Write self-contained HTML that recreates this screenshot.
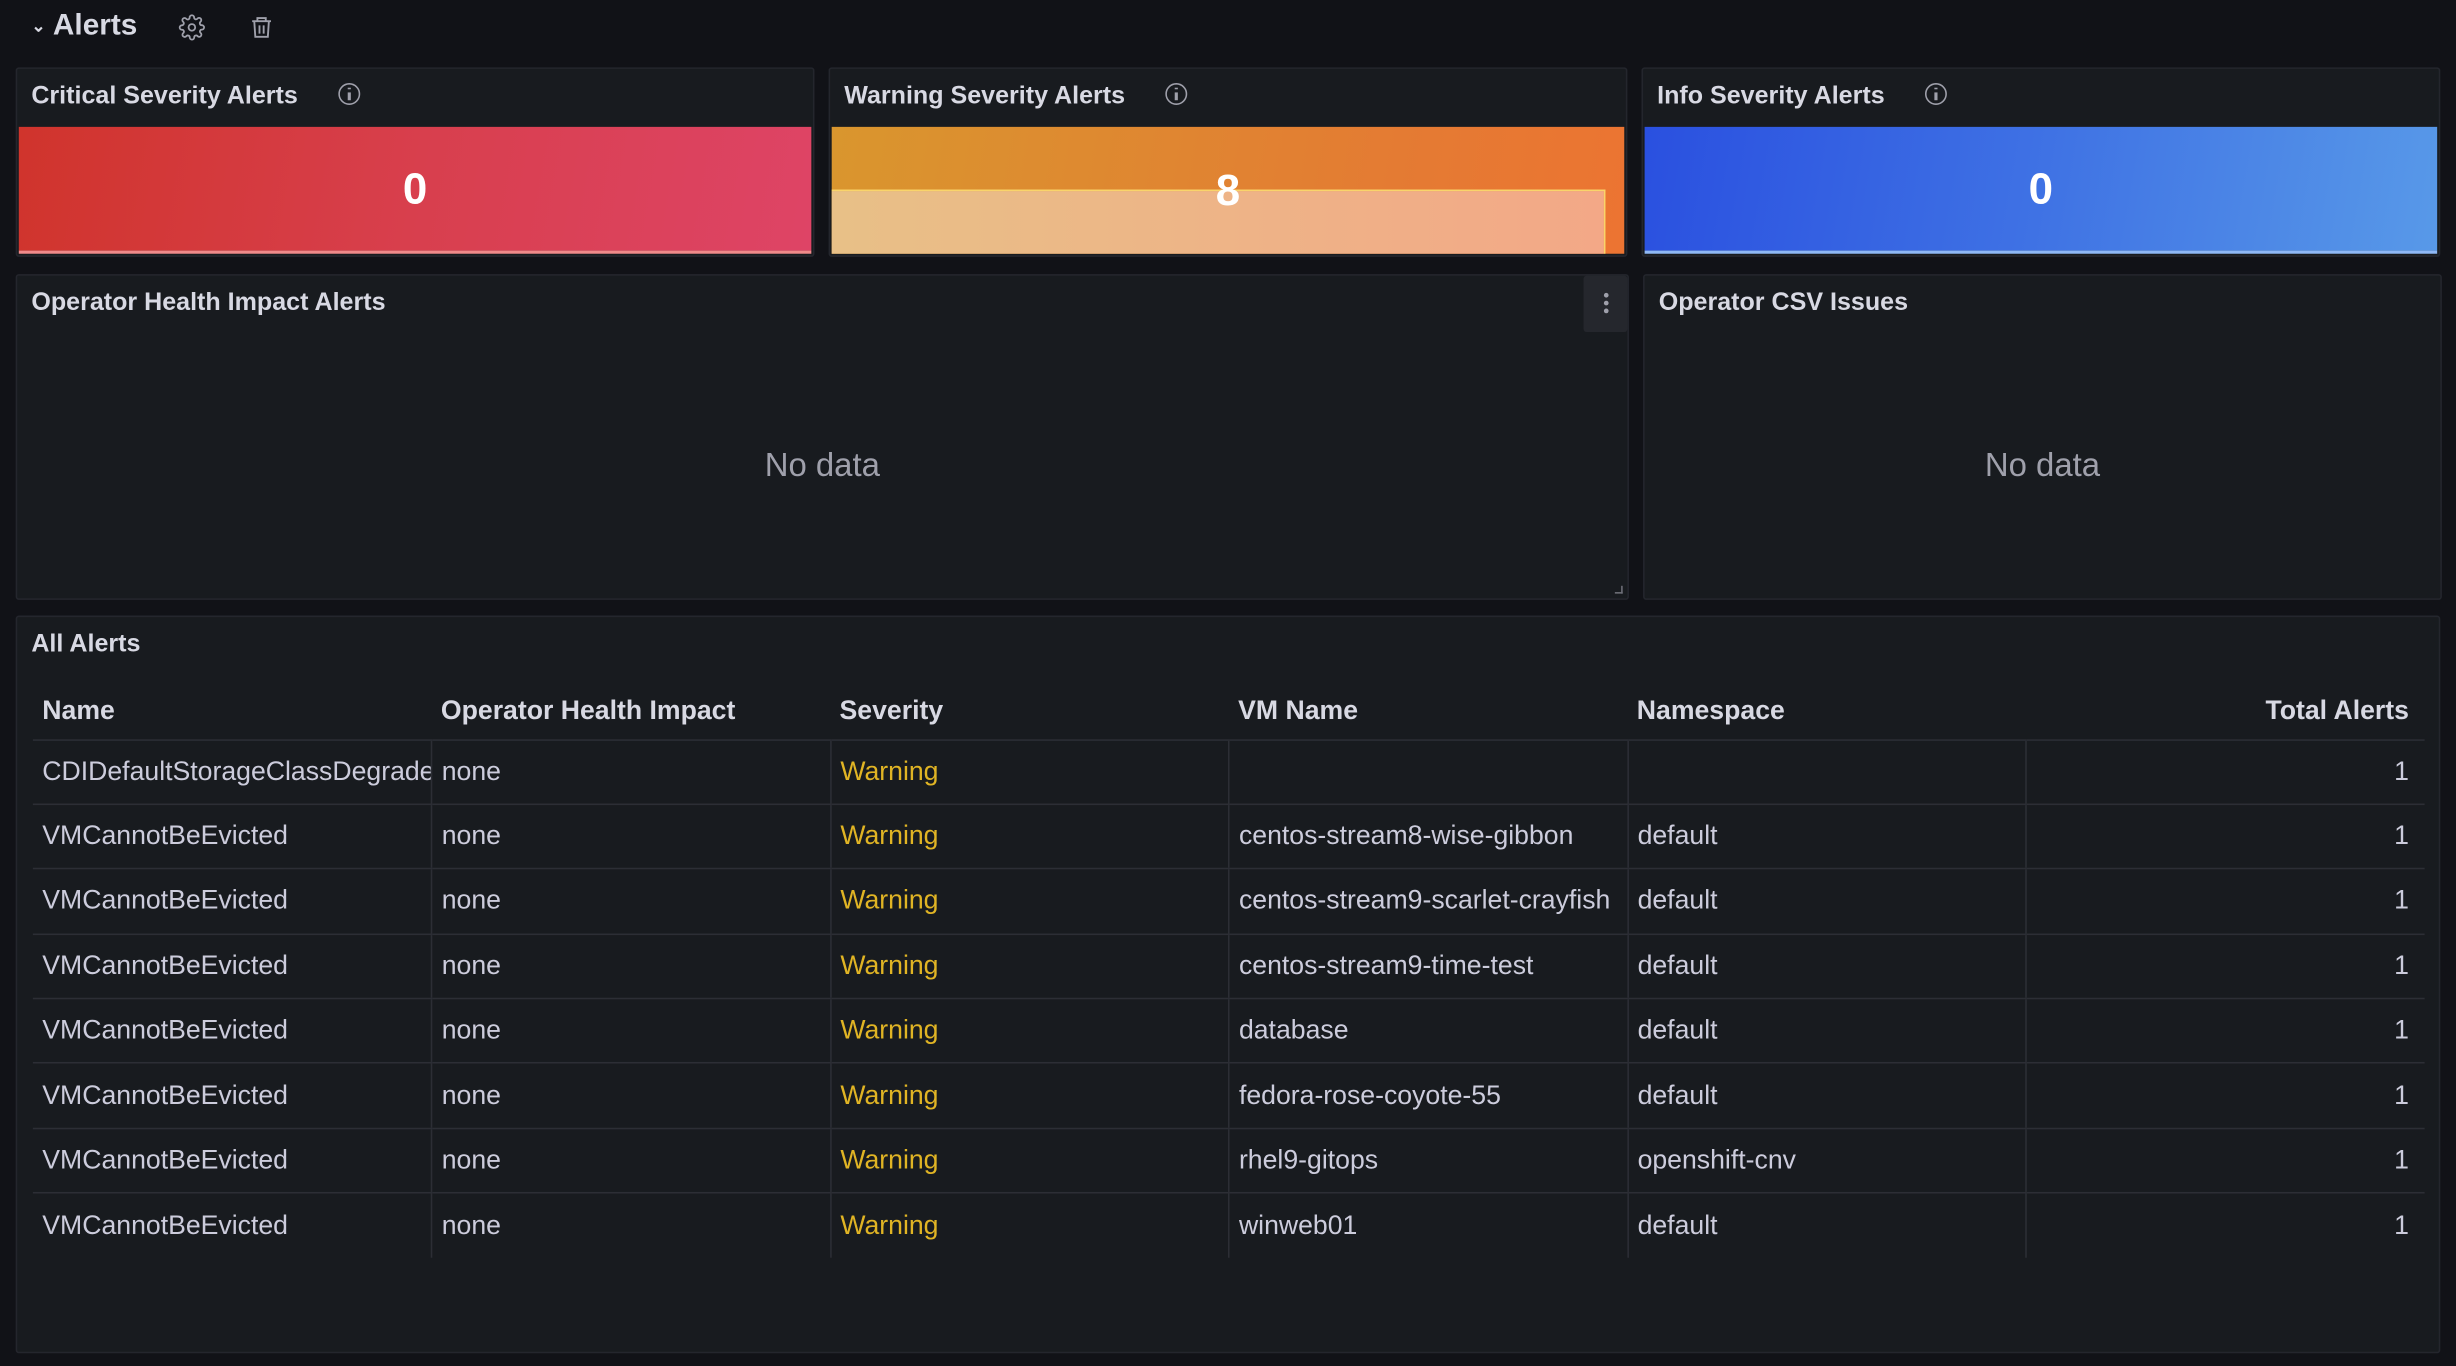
<!DOCTYPE html>
<html><head><meta charset="utf-8"><style>
*{box-sizing:border-box;margin:0;padding:0}
html,body{width:2456px;height:1366px;overflow:hidden;background:#111217}
#w{width:1568px;height:872px;transform:scale(1.5663);transform-origin:0 0;position:relative;font-family:"Liberation Sans",sans-serif;color:#ccccdc}
.a{position:absolute}
.p{position:absolute;background:#181b1f;border:1px solid #24262d;border-radius:2px}
.t{position:absolute;left:9px;top:9px;font-size:16px;font-weight:bold;color:#d8d9e3}
.stat{position:absolute;left:0;right:0;top:37px;bottom:0;display:flex;align-items:center;justify-content:center;font-size:28px;font-weight:bold;color:#fff}
.nd{position:absolute;left:0;right:0;top:110px;text-align:center;font-size:21px;color:#9fa0ab}
table{position:absolute;left:10px;top:42px;border-collapse:collapse;width:1527px;table-layout:fixed;font-size:17px}
th{height:36px;text-align:left;font-weight:bold;padding:0 6px;color:#d8d9e3;border-bottom:1px solid #2c2e35}
td{height:41.4px;padding:0 6px;white-space:nowrap;overflow:hidden;border-bottom:1px solid #2c2e35;border-left:1px solid #2c2e35}
td:first-child{border-left:none}
tr:last-child td{border-bottom:none}
.w{color:#e0b424}
.r{text-align:right;padding-right:10px}
.i{display:inline-block;width:14px;height:14px;border:1.4px solid #9fa0ab;border-radius:50%;position:relative;vertical-align:-1px;margin-left:26px}
.i:after{content:"";position:absolute;left:5px;top:5px;width:1.4px;height:5px;background:#9fa0ab}
.i:before{content:"";position:absolute;left:5px;top:2px;width:1.4px;height:1.4px;background:#9fa0ab}
</style></head><body><div id="w">
<div class="a" style="left:20px;top:6px;font-size:19px;font-weight:bold;color:#d8d9e3"><span style="font-size:11px;vertical-align:2px">⌄</span> Alerts</div>
<svg class="a" style="left:114px;top:9px" width="17" height="17" viewBox="0 0 24 24" fill="none" stroke="#9fa0ab" stroke-width="1.6"><circle cx="12" cy="12" r="3"/><path d="M19.4 15a1.7 1.7 0 0 0 .3 1.8l.1.1a2 2 0 1 1-2.8 2.8l-.1-.1a1.7 1.7 0 0 0-1.8-.3 1.7 1.7 0 0 0-1 1.5V21a2 2 0 1 1-4 0v-.1a1.7 1.7 0 0 0-1.1-1.5 1.7 1.7 0 0 0-1.8.3l-.1.1a2 2 0 1 1-2.8-2.8l.1-.1a1.7 1.7 0 0 0 .3-1.8 1.7 1.7 0 0 0-1.5-1H3a2 2 0 1 1 0-4h.1a1.7 1.7 0 0 0 1.5-1.1 1.7 1.7 0 0 0-.3-1.8l-.1-.1a2 2 0 1 1 2.8-2.8l.1.1a1.7 1.7 0 0 0 1.8.3H9a1.7 1.7 0 0 0 1-1.5V3a2 2 0 1 1 4 0v.1a1.7 1.7 0 0 0 1 1.5 1.7 1.7 0 0 0 1.8-.3l.1-.1a2 2 0 1 1 2.8 2.8l-.1.1a1.7 1.7 0 0 0-.3 1.8V9a1.7 1.7 0 0 0 1.5 1H21a2 2 0 1 1 0 4h-.1a1.7 1.7 0 0 0-1.5 1z"/></svg>
<svg class="a" style="left:159px;top:9px" width="16" height="17" viewBox="0 0 24 24" fill="none" stroke="#9fa0ab" stroke-width="1.8"><path d="M3 6h18M8 6V3h8v3M5 6l1 15h12l1-15M10 10v8M14 10v8"/></svg>

<div class="p" style="left:10px;top:43px;width:510px;height:121px"><div class="t">Critical Severity Alerts<span class="i"></span></div>
<div class="stat" style="left:1px;right:1px;bottom:1px;background:linear-gradient(100deg,#d0342c,#d83f4d 50%,#de4466);border-bottom:2px solid #f08a8a">0</div></div>
<div class="p" style="left:529px;top:43px;width:510px;height:121px"><div class="t">Warning Severity Alerts<span class="i"></span></div>
<div class="stat" style="left:1px;right:1px;bottom:1px;background:linear-gradient(100deg,#d9962e,#e47b33 70%,#ec7432)"><div class="a" style="left:0;bottom:0;width:494px;height:41px;background:linear-gradient(90deg,#e8c087,#f3a887);border-top:1.5px solid #f9d46b;border-right:1.5px solid #f9d46b"></div><span style="position:relative">8</span></div></div>
<div class="p" style="left:1048px;top:43px;width:510px;height:121px"><div class="t">Info Severity Alerts<span class="i"></span></div>
<div class="stat" style="left:1px;right:1px;bottom:1px;background:linear-gradient(100deg,#2a50e0,#3f72e4 50%,#5899e8);border-bottom:2px solid #8fb8f5">0</div></div>

<div class="p" style="left:10px;top:175px;width:1030px;height:208px"><div class="t">Operator Health Impact Alerts</div>
<div class="a" style="right:0;top:0;width:28px;height:36px;background:#25272d;border-radius:2px"><div class="a" style="left:13px;top:11px;width:3px;height:3px;border-radius:50%;background:#9fa0ab;box-shadow:0 5px #9fa0ab,0 10px #9fa0ab"></div></div>
<div class="a" style="right:3px;bottom:3px;width:5px;height:5px;border-right:1px solid #6e6f78;border-bottom:1px solid #6e6f78"></div>
<div class="nd">No data</div></div>
<div class="p" style="left:1049px;top:175px;width:510px;height:208px"><div class="t">Operator CSV Issues</div><div class="nd">No data</div></div>

<div class="p" style="left:10px;top:393px;width:1548px;height:471px"><div class="t">All Alerts</div>
<table><tr><th>Name</th><th>Operator Health Impact</th><th>Severity</th><th>VM Name</th><th>Namespace</th><th class="r">Total Alerts</th></tr>
<tr><td>CDIDefaultStorageClassDegraded</td><td>none</td><td class="w">Warning</td><td></td><td></td><td class="r">1</td></tr>
<tr><td>VMCannotBeEvicted</td><td>none</td><td class="w">Warning</td><td>centos-stream8-wise-gibbon</td><td>default</td><td class="r">1</td></tr>
<tr><td>VMCannotBeEvicted</td><td>none</td><td class="w">Warning</td><td>centos-stream9-scarlet-crayfish</td><td>default</td><td class="r">1</td></tr>
<tr><td>VMCannotBeEvicted</td><td>none</td><td class="w">Warning</td><td>centos-stream9-time-test</td><td>default</td><td class="r">1</td></tr>
<tr><td>VMCannotBeEvicted</td><td>none</td><td class="w">Warning</td><td>database</td><td>default</td><td class="r">1</td></tr>
<tr><td>VMCannotBeEvicted</td><td>none</td><td class="w">Warning</td><td>fedora-rose-coyote-55</td><td>default</td><td class="r">1</td></tr>
<tr><td>VMCannotBeEvicted</td><td>none</td><td class="w">Warning</td><td>rhel9-gitops</td><td>openshift-cnv</td><td class="r">1</td></tr>
<tr><td>VMCannotBeEvicted</td><td>none</td><td class="w">Warning</td><td>winweb01</td><td>default</td><td class="r">1</td></tr>
</table></div>
</div></body></html>
